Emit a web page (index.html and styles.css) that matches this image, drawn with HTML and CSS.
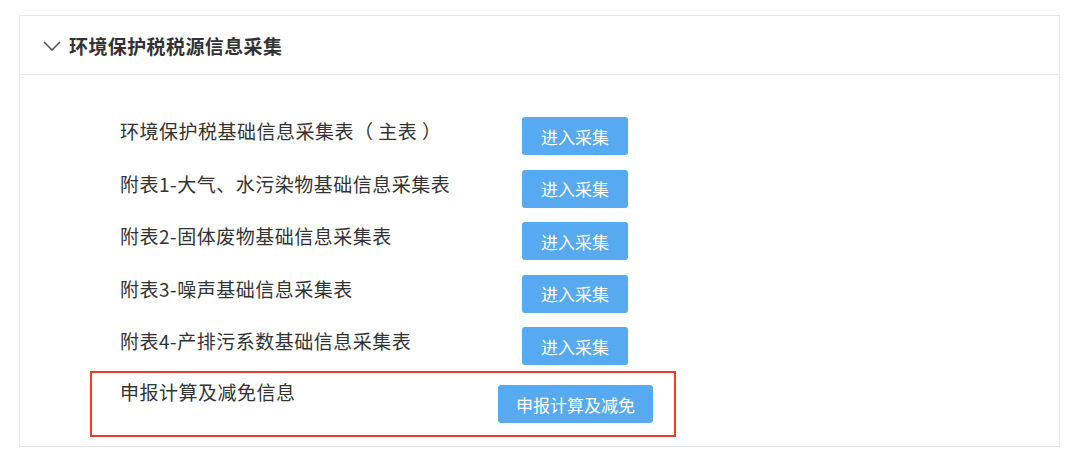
FILE: index.html
```html
<!DOCTYPE html>
<html lang="zh-CN">
<head>
<meta charset="utf-8">
<title>环境保护税税源信息采集</title>
<link rel="stylesheet" href="styles.css">
</head>
<body>
<div class="card">
  <div class="card-header">
    <svg class="chevron" width="18" height="10" viewBox="0 0 18 10"><path d="M1 1 L9 9 L17 1" fill="none" stroke="#555" stroke-width="1.6"/></svg>
    <span class="title">环境保护税税源信息采集</span>
  </div>
  <div class="card-body">
    <div class="list">
      <div class="row"><span class="label">环境保护税基础信息采集表（ 主表 ）</span><button class="btn">进入采集</button></div>
      <div class="row"><span class="label">附表1-大气、水污染物基础信息采集表</span><button class="btn">进入采集</button></div>
      <div class="row"><span class="label">附表2-固体废物基础信息采集表</span><button class="btn">进入采集</button></div>
      <div class="row"><span class="label">附表3-噪声基础信息采集表</span><button class="btn">进入采集</button></div>
      <div class="row"><span class="label">附表4-产排污系数基础信息采集表</span><button class="btn">进入采集</button></div>
    </div>
    <div class="highlight">
      <span class="hl-label">申报计算及减免信息</span>
      <button class="btn btn-wide">申报计算及减免</button>
    </div>
  </div>
</div>
</body>
</html>
```
FILE: styles.css
```css
* { box-sizing: border-box; }
html, body { margin: 0; padding: 0; background: #fff; }
body {
  font-family: "Noto Sans CJK SC", "Noto Sans", sans-serif;
  color: #333;
  padding-top: 15px;
  padding-left: 19px;
}
.card {
  width: 1041px;
  border: 1px solid #e6e6e6;
  background: #fff;
}
.card-header {
  height: 59px;
  border-bottom: 1px solid #e8e8e8;
  display: flex;
  align-items: center;
  padding-left: 23px;
}
.chevron { margin-right: 8px; margin-top: 1px; }
.title {
  font-size: 19px;
  letter-spacing: 0.4px;
  font-weight: bold;
  color: #333;
}
.card-body {
  height: 371px;
  padding-top: 42px;
}
.list {
  display: flex;
  flex-direction: column;
  gap: 14.5px;
  padding-left: 100px;
}
.row {
  display: flex;
  align-items: flex-start;
  height: 38px;
}
.label {
  width: 402px;
  font-size: 19px;
  letter-spacing: 0.5px;
  line-height: 28px;
  white-space: nowrap;
}
.btn {
  width: 106px;
  height: 38px;
  border: none;
  border-radius: 3px;
  background: #58aaf0;
  color: #fff;
  font-family: "Noto Sans CJK SC", "Noto Sans", sans-serif;
  font-size: 17px;
  padding: 0;
  cursor: pointer;
}
.btn-wide { width: 155px; margin-top: 7px; }
.highlight {
  margin-top: 6px;
  margin-left: 70px;
  width: 586px;
  height: 66px;
  border: 2px solid #e8402a;
  display: flex;
  align-items: flex-start;
  padding-left: 28px;
  padding-top: 5px;
}
.hl-label {
  width: 378px;
  font-size: 19px;
  letter-spacing: 0.5px;
  line-height: 28px;
  white-space: nowrap;
}
```
